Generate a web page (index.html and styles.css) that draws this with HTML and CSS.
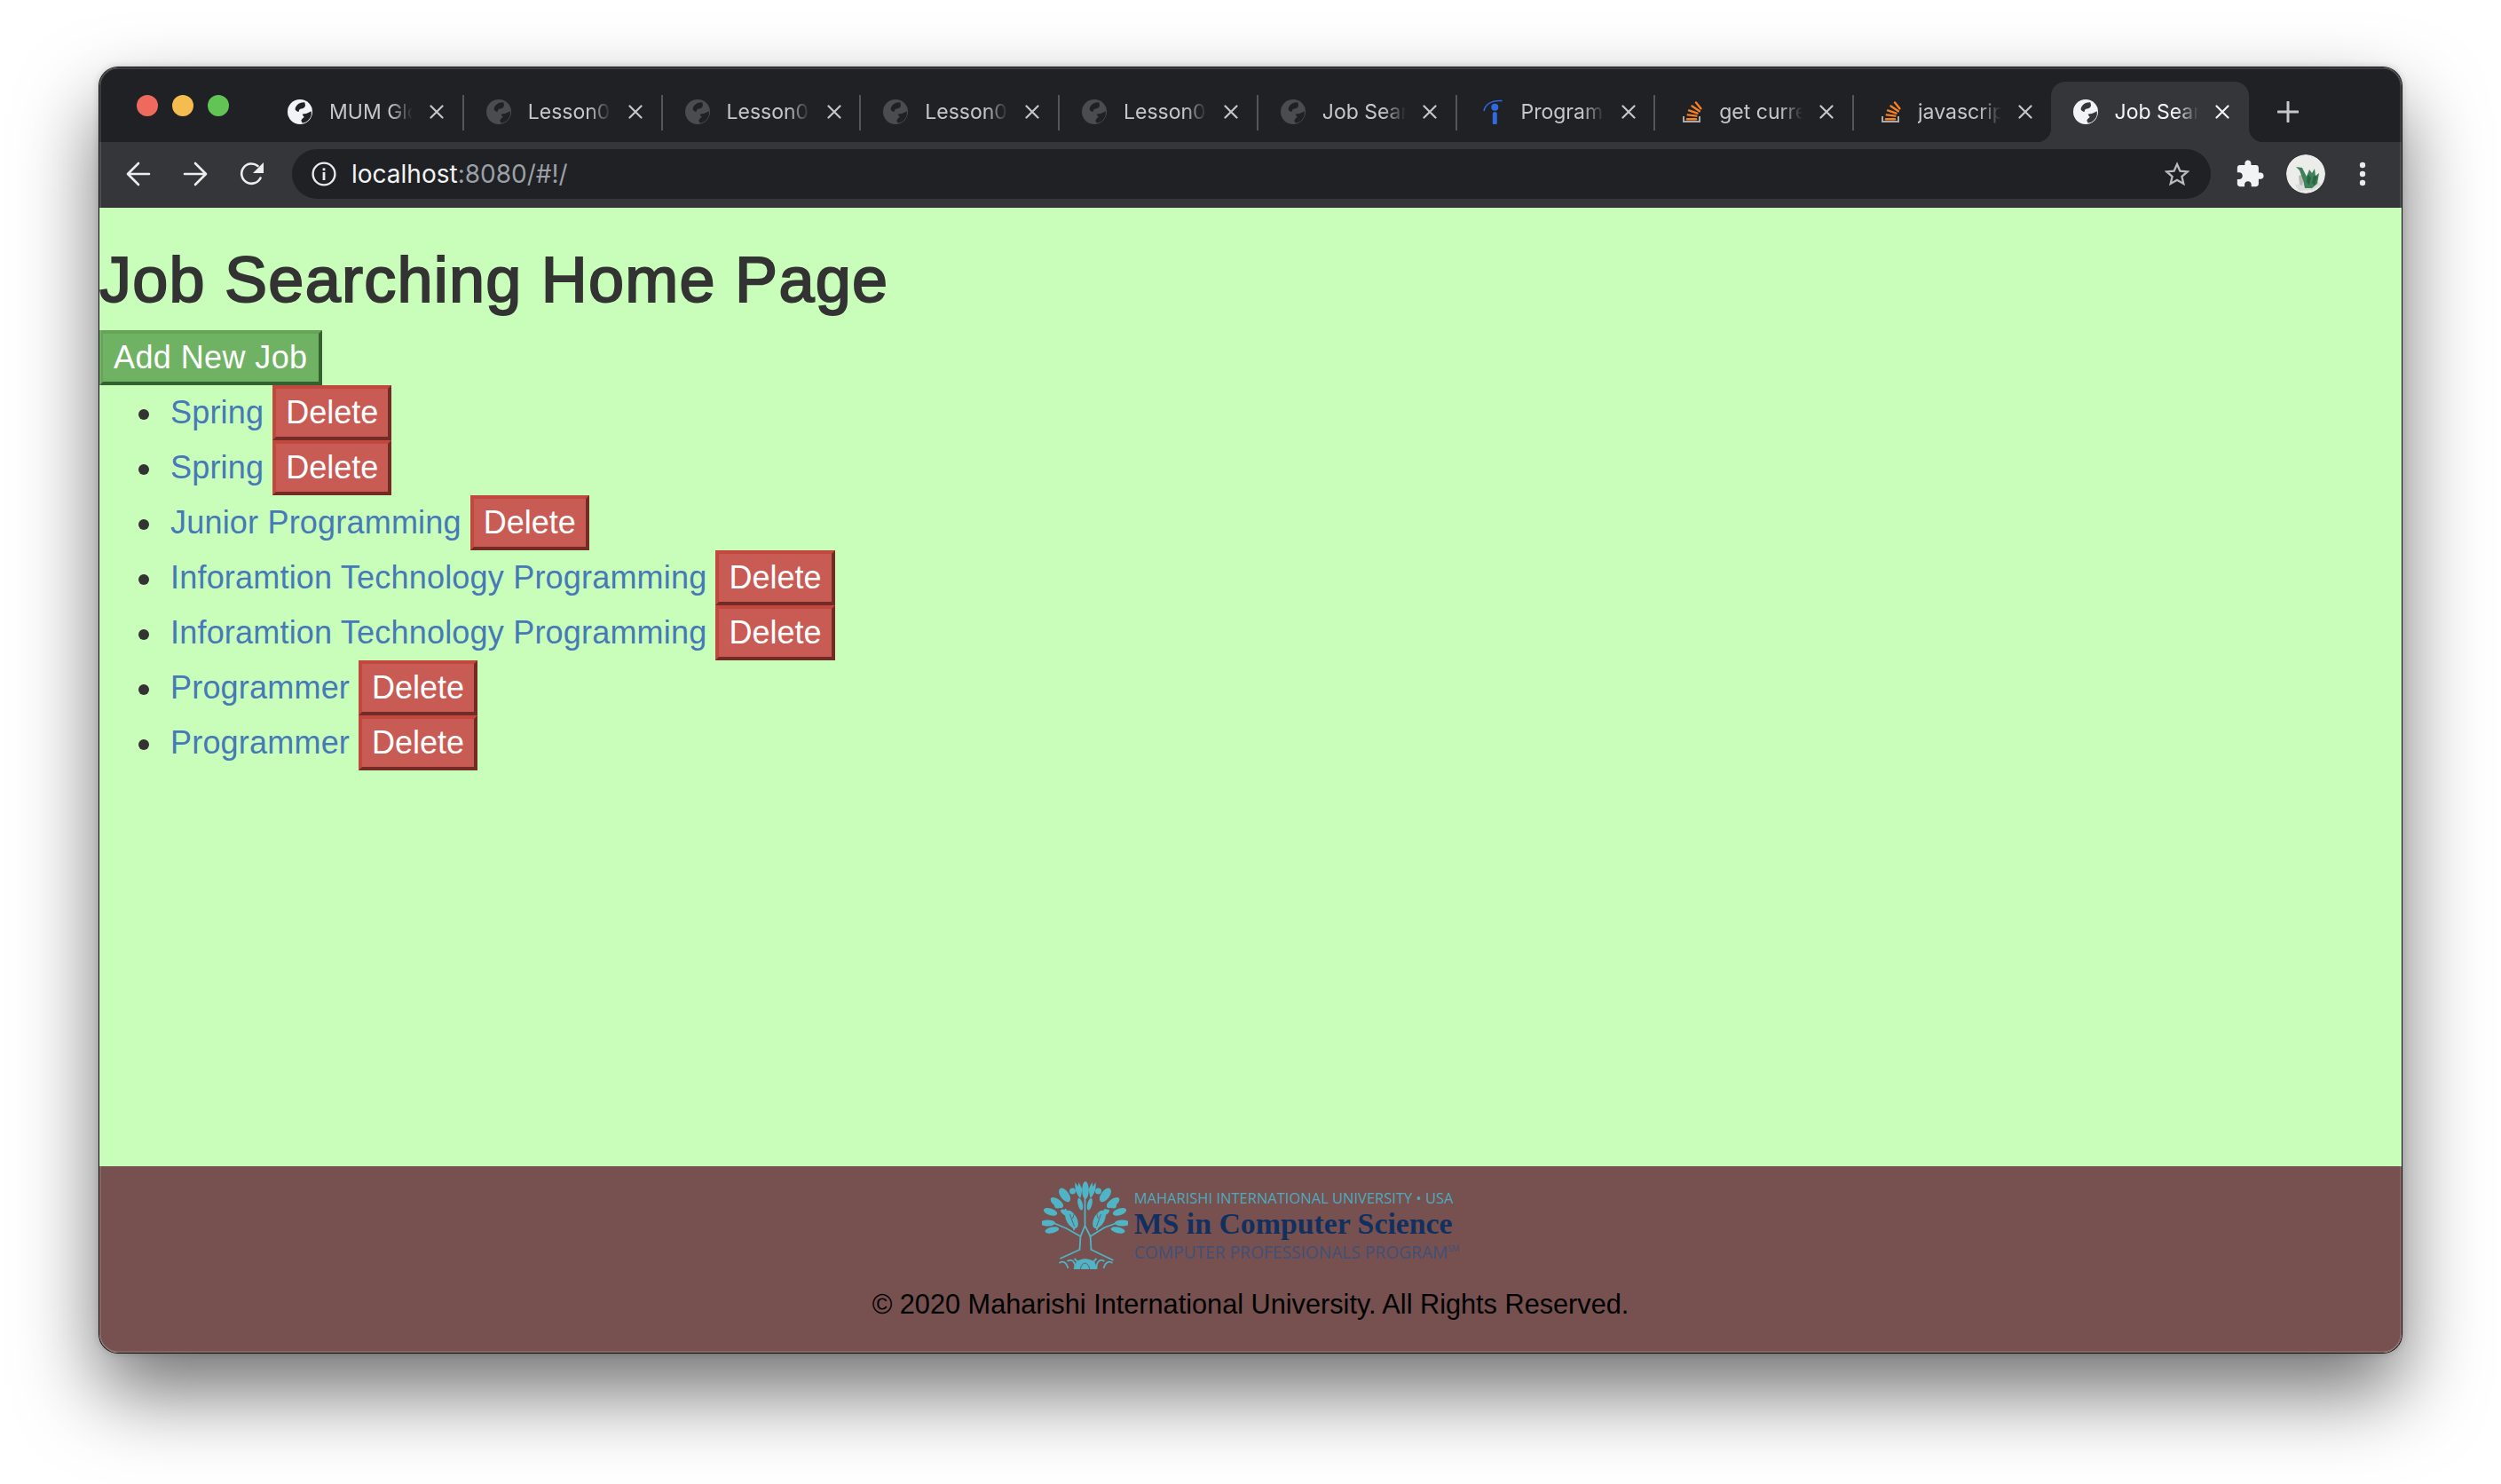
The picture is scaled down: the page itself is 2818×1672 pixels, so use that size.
FILE: index.html
```html
<!DOCTYPE html>
<html lang="en">
<head>
<meta charset="utf-8">
<title>Job Searching Home Page</title>
<link rel="stylesheet" href="styles.css">
</head>
<body>
<svg class="defs" width="0" height="0" aria-hidden="true">
  <symbol id="globe" viewBox="0 0 16 16">
    <circle cx="8" cy="8" r="8" fill="currentColor"/>
    <path fill="var(--patch)" d="M11 1.800C9 1.700 7.200 2.400 6.200 3.500 5.200 4.600 4.800 5.600 5 6.700 5.500 7.400 6.300 7.900 7.200 8 7.300 7 7.600 6.400 8.200 6.100 9.200 5.900 10.200 5.800 10.700 5.300 11.300 4.600 11.500 3.900 11.400 3.400z"/>
    <path fill="var(--patch)" d="M15.300 7.600C14.200 8.200 13.100 8.800 12 9.100 11.100 9.300 10.300 9.300 9.500 9.500 9.800 10.200 10.300 10.800 10.700 11.400 10 12 9.200 12.600 8.800 13.300 8.900 14 9.100 14.700 9.500 15.200 11 14.900 12.100 14.500 13 13.700 14.200 12.700 15 11.400 15.300 10z"/>
  </symbol>
  <symbol id="so" viewBox="0 0 28 28">
    <path d="M7 19v6h18v-6" fill="none" stroke="#a9aaad" stroke-width="2"/>
    <g stroke="#f48024" stroke-width="2.400" fill="none" stroke-linecap="round">
      <path d="M11 22.300h10"/>
      <path d="M11.700 17.400l9.800 1.200"/>
      <path d="M13 12.400l9.500 3.300"/>
      <path d="M16.500 7.400l8.400 5.800"/>
      <path d="M21 3.500l5.400 6.800"/>
    </g>
  </symbol>
  <symbol id="x" viewBox="0 0 16 16">
    <path d="M1.500 1.500l13 13M14.500 1.500l-13 13" fill="none" stroke="currentColor" stroke-width="2.200" stroke-linecap="round"/>
  </symbol>
</svg>

<div class="window">
  <div class="tabstrip">
    <div class="lights">
      <span class="light light-red"></span>
      <span class="light light-yellow"></span>
      <span class="light light-green"></span>
    </div>
    <div class="tab"><svg class="fav fav-bright"><use href="#globe"/></svg><span class="tab-title">MUM Global</span><svg class="close"><use href="#x"/></svg></div>
    <div class="tab"><svg class="fav fav-dim"><use href="#globe"/></svg><span class="tab-title">Lesson09</span><svg class="close"><use href="#x"/></svg></div>
    <div class="tab"><svg class="fav fav-dim"><use href="#globe"/></svg><span class="tab-title">Lesson09</span><svg class="close"><use href="#x"/></svg></div>
    <div class="tab"><svg class="fav fav-dim"><use href="#globe"/></svg><span class="tab-title">Lesson09</span><svg class="close"><use href="#x"/></svg></div>
    <div class="tab"><svg class="fav fav-dim"><use href="#globe"/></svg><span class="tab-title">Lesson09</span><svg class="close"><use href="#x"/></svg></div>
    <div class="tab"><svg class="fav fav-dim"><use href="#globe"/></svg><span class="tab-title">Job Search</span><svg class="close"><use href="#x"/></svg></div>
    <div class="tab">
      <svg class="fav" viewBox="0 0 28 28"><path d="M5 13C6.500 6 13 .8 25.500 1.600" fill="none" stroke="#2f6ae0" stroke-width="1.700"/><circle cx="17.300" cy="8.700" r="4" fill="#2f6ae0"/><rect x="14.800" y="14" width="5" height="14.700" rx="2.500" fill="#2f6ae0"/></svg>
      <span class="tab-title">Programming</span><svg class="close"><use href="#x"/></svg>
    </div>
    <div class="tab"><svg class="fav"><use href="#so"/></svg><span class="tab-title">get current</span><svg class="close"><use href="#x"/></svg></div>
    <div class="tab tab-last"><svg class="fav"><use href="#so"/></svg><span class="tab-title">javascript</span><svg class="close"><use href="#x"/></svg></div>
    <div class="tab tab-active"><svg class="fav fav-bright"><use href="#globe"/></svg><span class="tab-title">Job Search</span><svg class="close"><use href="#x"/></svg></div>
    <svg class="newtab" viewBox="0 0 24 24"><path d="M12 1v22M1 12h22" fill="none" stroke="#c4c7cb" stroke-width="3" stroke-linecap="round"/></svg>
  </div>

  <div class="toolbar">
    <svg class="navicon" viewBox="0 0 28 28"><path d="M26 14H3M14 2L2 14l12 12" fill="none" stroke="#eceded" stroke-width="2.600" stroke-linecap="round" stroke-linejoin="round"/></svg>
    <svg class="navicon" viewBox="0 0 28 28"><path d="M2 14h23M14 2l12 12-12 12" fill="none" stroke="#eceded" stroke-width="2.600" stroke-linecap="round" stroke-linejoin="round"/></svg>
    <svg class="navicon" viewBox="0 0 28 28"><path d="M23.500 18.500A11.200 11.200 0 1 1 20.500 5" fill="none" stroke="#eceded" stroke-width="2.600" stroke-linecap="round"/><path d="M27 1v12H15z" fill="#eceded"/></svg>
    <div class="omnibox">
      <svg class="info" viewBox="0 0 28 28"><circle cx="14" cy="14" r="12.400" fill="none" stroke="#e8eaed" stroke-width="2.400"/><rect x="12.600" y="12" width="2.800" height="9" fill="#e8eaed"/><rect x="12.600" y="7.400" width="2.800" height="2.800" fill="#e8eaed"/></svg>
      <span class="url"><span class="url-host">localhost</span>:8080/#!/</span>
      <svg class="star" viewBox="0 0 28 28"><path d="M14 3l3.400 7.600 8.300.8-6.300 5.500 1.900 8.100L14 20.800 6.700 25l1.900-8.100-6.300-5.500 8.300-.8z" fill="none" stroke="#b9bbbe" stroke-width="2.300" stroke-linejoin="miter"/></svg>
    </div>
    <svg class="puzzle" viewBox="0 0 24 24"><path fill="#f1f3f4" d="M20.500 11H19V7c0-1.100-.9-2-2-2h-4V3.500C13 2.120 11.880 1 10.500 1S8 2.120 8 3.500V5H4c-1.100 0-1.990.9-1.990 2v3.800H3.500c1.490 0 2.700 1.210 2.700 2.700s-1.210 2.700-2.700 2.700H2V20c0 1.100.9 2 2 2h3.800v-1.500c0-1.490 1.210-2.700 2.700-2.700 1.490 0 2.700 1.210 2.700 2.700V22H17c1.100 0 2-.9 2-2v-4h1.500c1.380 0 2.500-1.120 2.500-2.500S21.880 11 20.500 11z"/></svg>
    <svg class="avatar" viewBox="0 0 44 44">
      <circle cx="22" cy="22" r="22" fill="#ececea"/>
      <path d="M10 34l26-3 4 3-10 6-16 1z" fill="#dcdcda"/>
      <path d="M14 24l3-1 3 4-2 8-3-1z" fill="#b9bab7"/>
      <path d="M11 14l7 1 5 10 3-8 3 4 3-5 1 8 4-3-2 12-6 5-8 0-2-9-4-11z" fill="#3e8259"/>
      <path d="M24 22l4 4-2 9-3-4zM31 24l4 1-3 10-3-3z" fill="#2a6844"/>
    </svg>
    <svg class="menu" viewBox="0 0 8 28"><circle cx="4" cy="4" r="3.200" fill="#e8eaed"/><circle cx="4" cy="14" r="3.200" fill="#e8eaed"/><circle cx="4" cy="24" r="3.200" fill="#e8eaed"/></svg>
  </div>

  <main class="page">
    <h1 class="title">Job Searching Home Page</h1>
    <button class="btn btn-add" type="button">Add New Job</button>
    <ul class="jobs">
      <li><a class="job-link" href="#">Spring</a> <button class="btn btn-delete" type="button">Delete</button></li>
      <li><a class="job-link" href="#">Spring</a> <button class="btn btn-delete" type="button">Delete</button></li>
      <li><a class="job-link" href="#">Junior Programming</a> <button class="btn btn-delete" type="button">Delete</button></li>
      <li><a class="job-link" href="#">Inforamtion Technology Programming</a> <button class="btn btn-delete" type="button">Delete</button></li>
      <li><a class="job-link" href="#">Inforamtion Technology Programming</a> <button class="btn btn-delete" type="button">Delete</button></li>
      <li><a class="job-link" href="#">Programmer</a> <button class="btn btn-delete" type="button">Delete</button></li>
      <li><a class="job-link" href="#">Programmer</a> <button class="btn btn-delete" type="button">Delete</button></li>
    </ul>
  </main>

  <footer class="footer">
    <div class="logo">
      <svg class="tree" viewBox="0 0 96 100">
        <g fill="#4fb4c6">
          <ellipse cx="48.500" cy="11" rx="3.800" ry="10"/>
          <path d="M37 2l3 5 1-5 4 8-2 10c-4-3-7-10-6-18zM60 2l-3 5-1-5-4 8 2 10c4-3 7-10 6-18z"/>
          <ellipse cx="48" cy="9" rx="4.800" ry="9" transform="rotate(-36 48 48)"/>
          <ellipse cx="48" cy="9" rx="4.800" ry="9" transform="rotate(36 48 48)"/>
          <ellipse cx="48" cy="9" rx="4.200" ry="8.500" transform="rotate(-54 48 48)"/>
          <ellipse cx="48" cy="9" rx="4.200" ry="8.500" transform="rotate(54 48 48)"/>
          <ellipse cx="48" cy="7" rx="3.800" ry="8" transform="rotate(-72 48 48)"/>
          <ellipse cx="48" cy="7" rx="3.800" ry="8" transform="rotate(72 48 48)"/>
          <ellipse cx="48" cy="6" rx="3.400" ry="8.500" transform="rotate(-90 48 48)"/>
          <ellipse cx="48" cy="6" rx="3.400" ry="8.500" transform="rotate(90 48 48)"/>
          <ellipse cx="48" cy="10" rx="3.400" ry="8" transform="rotate(-102 48 48)"/>
          <ellipse cx="48" cy="10" rx="3.400" ry="8" transform="rotate(102 48 48)"/>
          <ellipse cx="48" cy="26" rx="2.600" ry="7" transform="rotate(-14 48 48)"/>
          <ellipse cx="48" cy="26" rx="2.600" ry="7" transform="rotate(14 48 48)"/>
          <ellipse cx="48" cy="24" rx="3" ry="7" transform="rotate(-62 48 48)"/>
          <ellipse cx="48" cy="24" rx="3" ry="7" transform="rotate(62 48 48)"/>
          <ellipse cx="33" cy="44" rx="6" ry="11" transform="rotate(-28 33 44)"/>
          <ellipse cx="64" cy="44" rx="6" ry="11" transform="rotate(28 64 44)"/>
          <circle cx="17" cy="28" r="3.500"/>
          <circle cx="80" cy="28" r="3.500"/>
          <circle cx="34" cy="12" r="3.500"/>
          <circle cx="63" cy="12" r="3.500"/>
          <path d="M38 92c6-5 14-5 21 0l3 8H35z"/>
        </g>
        <g fill="none" stroke="#775050" stroke-width=".9">
          <path d="M31 38l5 14M36 37l-2 6M66 38l-5 14M61 37l2 6"/>
          <path d="M43 100c0-4 2-6 5-7 3 1 5 3 5 7"/>
        </g>
        <g fill="none" stroke="#4fb4c6" stroke-width="1.800">
          <path d="M43 62l-1 16-22 10M54 62l1 16 25 12"/>
          <path d="M43 63L27 54 8 46M54 63l16-10 19-7"/>
          <path d="M43 63l5-12 6 12M48 51V18M36 56L26 32M61 56l10-24"/>
          <path d="M29 99c-2-7-6-9-10-6M37 99c0-8-4-11-9-8M61 99c0-8 4-11 9-8M69 99c2-7 6-9 10-6"/>
          <path d="M36 88l5 5M61 88l-5 5"/>
        </g>
      </svg>
      <div class="logo-text">
        <div class="logo-mui">MAHARISHI INTERNATIONAL UNIVERSITY • USA</div>
        <div class="logo-ms">MS in Computer Science</div>
        <div class="logo-cpp">COMPUTER PROFESSIONALS PROGRAM<sup class="logo-sm">SM</sup></div>
      </div>
    </div>
    <p class="copyright">© 2020 Maharishi International University. All Rights Reserved.</p>
  </footer>
</div>
</body>
</html>
```

FILE: styles.css
```css
* { box-sizing: border-box; }

html, body { margin: 0; }

body {
  height: 100vh;
  padding: 76px 0 0 112px;
  overflow: hidden;
  background: #fff;
  font-family: "Liberation Sans", Arial, sans-serif;
}

.defs { position: absolute; }

.window {
  position: relative;
  width: 2594px;
  height: 1448px;
  display: flex;
  flex-direction: column;
  border-radius: 21px;
  overflow: hidden;
}

body::before {
  content: "";
  position: absolute;
  left: 112px;
  top: 76px;
  width: 2594px;
  height: 1448px;
  border-radius: 21px;
  box-shadow: 0 44px 90px rgba(0, 0, 0, .56), 0 0 8px rgba(0, 0, 0, .22), 0 0 0 1px #111;
}

.window::after {
  content: "";
  position: absolute;
  inset: 0;
  border-radius: 21px;
  box-shadow: inset 0 0 0 1.5px rgba(255, 255, 255, .2);
  pointer-events: none;
}

/* Tab strip */
.tabstrip {
  height: 84px;
  flex: none;
  display: flex;
  align-items: flex-end;
  background: #202124;
  --patch: #202124;
}

.lights {
  width: 187px;
  height: 84px;
  flex: none;
  display: flex;
  gap: 16px;
  padding: 31px 0 0 42px;
}

.light { width: 24px; height: 24px; border-radius: 50%; }
.light-red { background: #ee6a5f; }
.light-yellow { background: #f5bd4f; }
.light-green { background: #61c454; }

.tab {
  position: relative;
  width: 223.75px;
  height: 68px;
  flex: none;
  display: flex;
  align-items: center;
  padding: 0 0 0 25px;
  color: #c4c6c9;
}

.tab::after {
  content: "";
  position: absolute;
  right: 0;
  top: 15px;
  width: 2px;
  height: 40px;
  background: #55565a;
}

.tab-last::after, .tab-active::after { display: none; }

.tab-active {
  margin-left: -2.25px;
  background: #35363a;
  border-radius: 16px 16px 0 0;
  color: #f1f3f4;
  --patch: #35363a;
}

.tab-active::before {
  content: "";
  position: absolute;
  left: -16px;
  right: -16px;
  bottom: 0;
  height: 16px;
  background:
    radial-gradient(circle at 0 0, transparent 16px, #35363a 16.5px) left bottom / 16px 16px no-repeat,
    radial-gradient(circle at 100% 0, transparent 16px, #35363a 16.5px) right bottom / 16px 16px no-repeat;
}

.fav { width: 28px; height: 28px; flex: none; }
.fav-bright { color: #f1f3f4; }
.fav-dim { color: #4b4c50; }

.tab-title {
  width: 96px;
  margin-left: 19px;
  flex: none;
  overflow: hidden;
  white-space: nowrap;
  font: 23px/32px Inter, "Liberation Sans", sans-serif;
  -webkit-mask-image: linear-gradient(90deg, #000 72%, transparent 98%);
  mask-image: linear-gradient(90deg, #000 72%, transparent 98%);
}

.close { width: 16px; height: 16px; margin-left: 17px; flex: none; }

.newtab { width: 24px; height: 24px; margin: 0 0 22px 32px; flex: none; }

/* Toolbar */
.toolbar {
  height: 74px;
  flex: none;
  display: flex;
  align-items: center;
  padding: 0 0 1px 30px;
  background: #35363a;
  border-bottom: 1px solid #27282b;
}

.navicon { width: 28px; height: 28px; margin-right: 36px; flex: none; }

.omnibox {
  width: 2162px;
  height: 56px;
  margin-left: -5px;
  flex: none;
  display: flex;
  align-items: center;
  padding: 0 24px 0 22px;
  background: #202124;
  border-radius: 28px;
}

.info { width: 28px; height: 28px; flex: none; }

.url {
  margin-left: 17px;
  flex: 1;
  font: 28px/36px Inter, "Liberation Sans", sans-serif;
  color: #9aa0a6;
}

.url-host { color: #f1f3f4; }

.star { width: 28px; height: 28px; flex: none; }

.puzzle { width: 34px; height: 34px; margin-left: 27px; flex: none; }

.avatar { width: 44px; height: 44px; margin-left: 24px; border-radius: 50%; flex: none; }

.menu { width: 8px; height: 28px; margin-left: 38px; flex: none; }

/* Page */
.page {
  flex: 1;
  background: #c9fdba;
  color: #333;
  font-size: 36px;
}

.title {
  margin: 42px 0 17px;
  font-size: 72px;
  line-height: 79px;
  font-weight: 400;
  letter-spacing: 1.25px;
  -webkit-text-stroke: 2px #333;
  color: #333;
}

.btn {
  display: inline-block;
  margin: 0;
  font: 36px/50px "Liberation Sans", Arial, sans-serif;
  color: #fff;
  border-width: 4px;
  border-style: solid;
}

.btn-add {
  display: block;
  padding: 2px 12px;
  letter-spacing: .4px;
  background: #70b263;
  border-color: #64a556 #356030 #356030 #64a556;
}

.btn-delete {
  padding: 2px 11px;
  background: #c85c55;
  border-color: #c0483e #742a25 #742a25 #c0483e;
}

.jobs {
  margin: 0;
  padding: 0 0 0 80px;
  line-height: 50px;
  list-style: none;
}

.jobs li { height: 62px; }

.jobs li::before {
  content: "";
  display: inline-block;
  width: 12px;
  height: 12px;
  margin: 0 24px 0 -36px;
  border-radius: 50%;
  background: #333;
  vertical-align: 4px;
}

.job-link {
  color: #4679b8;
  text-decoration: none;
  letter-spacing: .2px;
}

/* Footer */
.footer {
  height: 210px;
  flex: none;
  padding-top: 16px;
  background: #775050;
  text-align: center;
}

.logo {
  display: inline-flex;
  align-items: flex-start;
  gap: 7px;
  text-align: left;
  white-space: nowrap;
}

.tree { width: 97px; height: 100px; flex: none; }

.logo-text { padding-top: 10px; }

.logo-mui {
  font: 16.5px/20px "Open Sans", sans-serif;
  color: #4fa9bb;
}

.logo-ms {
  font: 700 33.8px/38px "Liberation Serif", serif;
  color: #12305f;
}

.logo-cpp {
  font: 19.2px/26px "Open Sans", sans-serif;
  color: #3f5078;
}

.logo-sm { font-size: 9px; vertical-align: 8px; line-height: 0; }

.copyright {
  margin: 15px 0 0;
  font-size: 30.7px;
  line-height: 42px;
  color: #000;
}
```
